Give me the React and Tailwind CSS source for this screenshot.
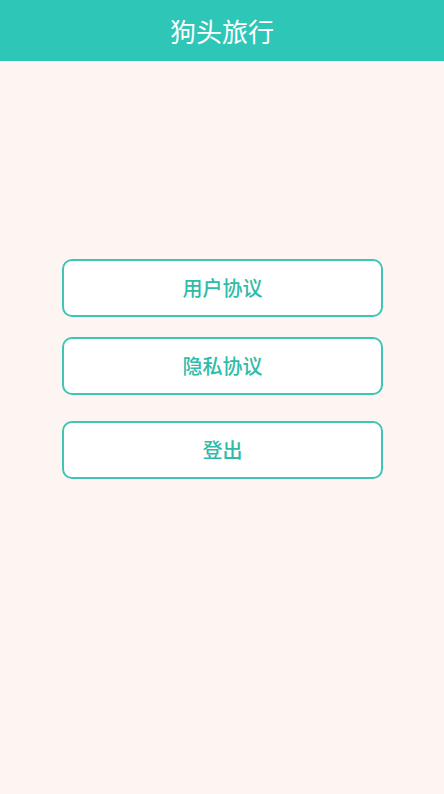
import React from "react";

const font = { fontFamily: '"Noto Sans CJK SC", "Noto Sans", sans-serif' };

const MenuButton = ({ label, className = "" }) => (
  <button
    className={
      "w-[321px] h-[58px] rounded-[10px] border-2 border-[#3ec5b3] bg-white text-[#2fbba8] text-[20px] font-medium flex items-center justify-center " +
      className
    }
  >
    {label}
  </button>
);

const App = () => {
  return (
    <div className="w-[444px] h-[794px] bg-[#fdf5f2] flex flex-col" style={font}>
      {/* header */}
      <div className="h-[61px] bg-[#2dc6b7] flex items-center justify-center shrink-0">
        <span className="text-white text-[26px] font-normal">狗头旅行</span>
      </div>

      {/* buttons */}
      <div className="flex flex-col items-center pt-[198px] pl-[1px]">
        <MenuButton label="用户协议" />
        <MenuButton label="隐私协议" className="mt-[20px]" />
        <MenuButton label="登出" className="mt-[26px]" />
      </div>
    </div>
  );
};

export default App;
